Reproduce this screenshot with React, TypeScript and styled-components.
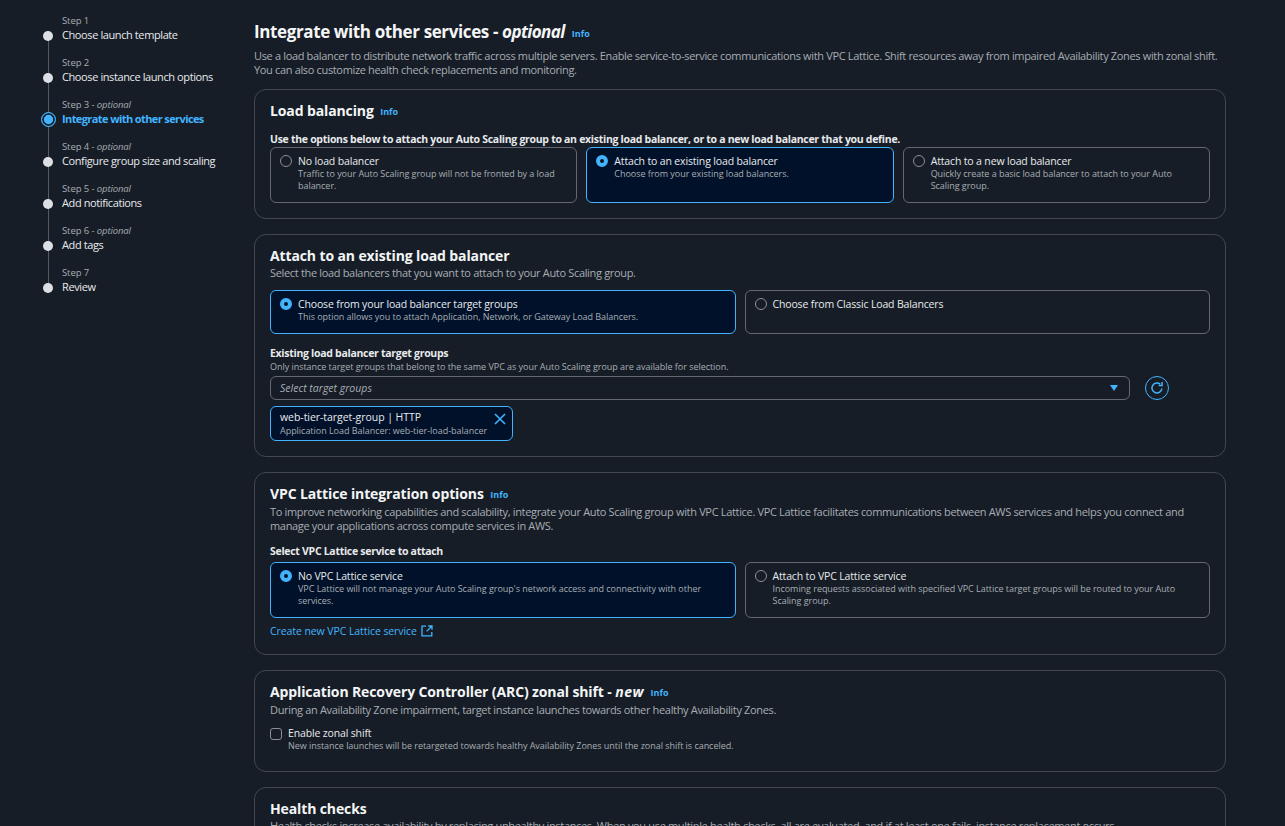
import styled, { createGlobalStyle } from "styled-components"

const GlobalStyle = createGlobalStyle`
    html, body {
        margin: 0;
        height: 826px;
        overflow: hidden;
        background: #161d26;
    }
    * { box-sizing: border-box; }
    body {
        font-family: "Open Sans", "Noto Sans", sans-serif;
        color: #e8eaed;
    }
`

const steps = [
    { label: "Step 1", title: "Choose launch template" },
    { label: "Step 2", title: "Choose instance launch options" },
    { label: "Step 3", optional: true, title: "Integrate with other services", active: true },
    { label: "Step 4", optional: true, title: "Configure group size and scaling" },
    { label: "Step 5", optional: true, title: "Add notifications" },
    { label: "Step 6", optional: true, title: "Add tags" },
    { label: "Step 7", title: "Review" },
]

const Radio = (props: { on?: boolean }) => <RadioDot $on={props.on} />

const Tile = (props: { title: string; text?: string; on?: boolean }) => (
    <TileBox $on={props.on}>
        <Radio on={props.on} />
        <div>
            <TileTitle>{props.title}</TileTitle>
            {props.text && <TileText>{props.text}</TileText>}
        </div>
    </TileBox>
)

export default function App() {
    return (
        <Page>
            <GlobalStyle />
            <Nav>
                {steps.map((s, i) => (
                    <NavStep key={s.label} $last={i === steps.length - 1}>
                        <NavLabel>
                            {s.label}
                            {s.optional && <> - <em>optional</em></>}
                        </NavLabel>
                        <NavTitle $active={s.active}>
                            <NavDot $active={s.active} />
                            {s.title}
                        </NavTitle>
                    </NavStep>
                ))}
            </Nav>
            <Main>
                <PageTitle>
                    Integrate with other services - <em>optional</em> <Info>Info</Info>
                </PageTitle>
                <PageText>
                    Use a load balancer to distribute network traffic across multiple servers. Enable service-to-service communications with VPC Lattice. Shift resources away from impaired Availability Zones with zonal shift. You can also customize health check replacements and monitoring.
                </PageText>

                <Card>
                    <CardTitle>Load balancing <Info>Info</Info></CardTitle>
                    <FieldLabel $top={10}>Use the options below to attach your Auto Scaling group to an existing load balancer, or to a new load balancer that you define.</FieldLabel>
                    <Tiles $cols={3} $height={56}>
                        <Tile title="No load balancer" text="Traffic to your Auto Scaling group will not be fronted by a load balancer." />
                        <Tile on title="Attach to an existing load balancer" text="Choose from your existing load balancers." />
                        <Tile title="Attach to a new load balancer" text="Quickly create a basic load balancer to attach to your Auto Scaling group." />
                    </Tiles>
                </Card>

                <Card>
                    <CardTitle>Attach to an existing load balancer</CardTitle>
                    <CardText>Select the load balancers that you want to attach to your Auto Scaling group.</CardText>
                    <Tiles $cols={2} $height={44} $top={10}>
                        <Tile on title="Choose from your load balancer target groups" text="This option allows you to attach Application, Network, or Gateway Load Balancers." />
                        <Tile title="Choose from Classic Load Balancers" />
                    </Tiles>
                    <FieldLabel $top={12}>Existing load balancer target groups</FieldLabel>
                    <Hint>Only instance target groups that belong to the same VPC as your Auto Scaling group are available for selection.</Hint>
                    <SelectRow>
                        <Select>
                            Select target groups
                            <Caret />
                        </Select>
                        <Refresh aria-label="Refresh">
                            <svg width="14" height="14" viewBox="0 0 16 16" fill="none" stroke="#42b4ff" strokeWidth="1.7">
                                <path d="M13.6 8.6A5.7 5.7 0 1 1 11.6 3.6" />
                                <path d="M13.8 1.2v3.9H9.9" />
                            </svg>
                        </Refresh>
                    </SelectRow>
                    <Chip>
                        <div>
                            <ChipTitle>web-tier-target-group | HTTP</ChipTitle>
                            <ChipText>Application Load Balancer: web-tier-load-balancer</ChipText>
                        </div>
                        <svg width="12" height="12" viewBox="0 0 12 12" stroke="#42b4ff" strokeWidth="1.6" fill="none">
                            <path d="M1 1l10 10M11 1L1 11" />
                        </svg>
                    </Chip>
                </Card>

                <Card $extra={1}>
                    <CardTitle>VPC Lattice integration options <Info>Info</Info></CardTitle>
                    <CardText>To improve networking capabilities and scalability, integrate your Auto Scaling group with VPC Lattice. VPC Lattice facilitates communications between AWS services and helps you connect and manage your applications across compute services in AWS.</CardText>
                    <FieldLabel $top={11}>Select VPC Lattice service to attach</FieldLabel>
                    <Tiles $cols={2} $height={56} $top={3}>
                        <Tile on title="No VPC Lattice service" text="VPC Lattice will not manage your Auto Scaling group's network access and connectivity with other services." />
                        <Tile title="Attach to VPC Lattice service" text="Incoming requests associated with specified VPC Lattice target groups will be routed to your Auto Scaling group." />
                    </Tiles>
                    <LinkLine>
                        Create new VPC Lattice service
                        <svg width="12" height="12" viewBox="0 0 12 12" fill="none" stroke="#42b4ff" strokeWidth="1.3">
                            <path d="M5 1.2H1v9.6h9.8V7" />
                            <path d="M7.2 1h3.8v3.8M11 1L5.6 6.4" />
                        </svg>
                    </LinkLine>
                </Card>

                <Card $extra={4}>
                    <CardTitle>Application Recovery Controller (ARC) zonal shift - <em>new</em> <Info>Info</Info></CardTitle>
                    <CardText>During an Availability Zone impairment, target instance launches towards other healthy Availability Zones.</CardText>
                    <CheckRow>
                        <CheckBox />
                        <div>
                            <TileTitle>Enable zonal shift</TileTitle>
                            <TileText>New instance launches will be retargeted towards healthy Availability Zones until the zonal shift is canceled.</TileText>
                        </div>
                    </CheckRow>
                </Card>

                <Card>
                    <CardTitle>Health checks</CardTitle>
                    <CardText>Health checks increase availability by replacing unhealthy instances. When you use multiple health checks, all are evaluated, and if at least one fails, instance replacement occurs.</CardText>
                </Card>
            </Main>
        </Page>
    )
}

const Page = styled.div`
    display: flex;
    align-items: flex-start;
    height: 826px;
    overflow: hidden;
    background: #161d26;
`

const Nav = styled.nav`
    width: 254px;
    flex: none;
    padding: 14px 0 0 62px;
`

const NavStep = styled.div<{ $last?: boolean }>`
    position: relative;
    height: 42px;

    &::before {
        content: "";
        display: ${p => (p.$last ? "none" : "block")};
        position: absolute;
        left: -14.5px;
        top: 21px;
        width: 1px;
        height: 42px;
        background: #545b64;
    }
`

const NavLabel = styled.div`
    font-size: 9.5px;
    line-height: 13px;
    letter-spacing: -0.1px;
    color: #a8adb4;

    em { font-style: italic; }
`

const NavTitle = styled.div<{ $active?: boolean }>`
    position: relative;
    font-size: 11px;
    line-height: 16px;
    letter-spacing: ${p => (p.$active ? "-0.6px" : "-0.4px")};
    white-space: nowrap;
    color: ${p => (p.$active ? "#42b4ff" : "#e8eaed")};
    font-weight: ${p => (p.$active ? 700 : 400)};
`

const NavDot = styled.span<{ $active?: boolean }>`
    position: absolute;
    top: 50%;
    left: ${p => (p.$active ? "-21px" : "-19px")};
    width: ${p => (p.$active ? "15px" : "10px")};
    height: ${p => (p.$active ? "15px" : "10px")};
    margin-top: ${p => (p.$active ? "-7px" : "-4px")};
    border-radius: 50%;
    background: ${p => (p.$active ? "#42b4ff" : "#dcdfe3")};
    border: ${p => (p.$active ? "1.5px solid #42b4ff" : "none")};
    box-shadow: ${p => (p.$active ? "inset 0 0 0 1.8px #161d26" : "none")};
`

const Main = styled.main`
    width: 972px;
    flex: none;
    padding-top: 20px;
`

const PageTitle = styled.h1`
    margin: 0;
    font-size: 17px;
    line-height: 24px;
    font-weight: 700;
    letter-spacing: -0.38px;
    color: #f4f5f6;

    em { font-style: italic; letter-spacing: -0.6px; }
`

const Info = styled.span`
    font-size: 9px;
    font-weight: 700;
    color: #42b4ff;
    margin-left: 3px;
    vertical-align: 1px;
    font-style: normal;
    letter-spacing: 0;
`

const PageText = styled.p`
    margin: 3px 0 12px;
    font-size: 11px;
    line-height: 14px;
    letter-spacing: -0.34px;
    color: #a8adb4;
`

const Card = styled.section<{ $extra?: number }>`
    border: 1px solid #424750;
    border-radius: 12px;
    padding: 11px 15px ${p => 15 + (p.$extra ?? 0)}px;
    margin-bottom: 15px;
`

const CardTitle = styled.h2`
    margin: 0;
    font-size: 14px;
    line-height: 20px;
    font-weight: 700;
    letter-spacing: -0.12px;
    color: #f4f5f6;

    em { font-style: italic; letter-spacing: 0.5px; }
`

const CardText = styled.p`
    margin: 0;
    font-size: 11px;
    line-height: 14px;
    letter-spacing: -0.33px;
    color: #a8adb4;
`

const FieldLabel = styled.div<{ $top?: number }>`
    margin-top: ${p => p.$top ?? 6}px;
    font-size: 10.5px;
    line-height: 15px;
    font-weight: 700;
    letter-spacing: -0.29px;
    color: #e8eaed;
`

const Tiles = styled.div<{ $cols: number; $height: number; $top?: number }>`
    display: grid;
    grid-template-columns: repeat(${p => p.$cols}, 1fr);
    grid-auto-rows: ${p => p.$height}px;
    gap: 9px;
    margin-top: ${p => p.$top ?? 0}px;
`

const TileBox = styled.div<{ $on?: boolean }>`
    display: flex;
    gap: 6px;
    padding: 6px 9px;
    border-radius: 6px;
    border: 1px solid ${p => (p.$on ? "#42b4ff" : "#656871")};
    background: ${p => (p.$on ? "#001129" : "transparent")};
`

const RadioDot = styled.span<{ $on?: boolean }>`
    flex: none;
    width: 12px;
    height: 12px;
    margin-top: 1px;
    border-radius: 50%;
    border: ${p => (p.$on ? "4px solid #42b4ff" : "1.5px solid #8c8f96")};
    background: ${p => (p.$on ? "#0f141a" : "transparent")};
`

const TileTitle = styled.div`
    font-size: 10.5px;
    line-height: 14px;
    letter-spacing: -0.15px;
    color: #e8eaed;
`

const TileText = styled.div`
    font-size: 9px;
    line-height: 12px;
    letter-spacing: -0.04px;
    color: #a8adb4;
`

const Hint = styled.div`
    font-size: 9px;
    line-height: 12px;
    letter-spacing: -0.04px;
    color: #a8adb4;
`

const SelectRow = styled.div`
    display: flex;
    align-items: center;
    gap: 15px;
    margin-top: 3px;
`

const Select = styled.div`
    width: 860px;
    height: 24px;
    display: flex;
    align-items: center;
    justify-content: space-between;
    padding: 0 11px 0 9px;
    border: 1px solid #656871;
    border-radius: 6px;
    font-size: 10.5px;
    font-style: italic;
    color: #a8adb4;
`

const Caret = styled.span`
    width: 0;
    height: 0;
    border-left: 4px solid transparent;
    border-right: 4px solid transparent;
    border-top: 6px solid #42b4ff;
`

const Refresh = styled.button`
    width: 24px;
    height: 24px;
    padding: 0;
    display: flex;
    align-items: center;
    justify-content: center;
    border: 1px solid #42b4ff;
    border-radius: 50%;
    background: transparent;
`

const Chip = styled.div`
    width: 243px;
    height: 35px;
    margin-top: 6px;
    padding: 3px 6px 0 9px;
    display: flex;
    align-items: flex-start;
    justify-content: space-between;
    border: 1px solid #42b4ff;
    border-radius: 6px;
    background: #001129;

    svg { margin-top: 3px; }
`

const ChipTitle = styled.div`
    font-size: 10.5px;
    line-height: 14px;
    letter-spacing: -0.05px;
    color: #e8eaed;
`

const ChipText = styled.div`
    font-size: 9px;
    line-height: 13px;
    letter-spacing: -0.03px;
    color: #a8adb4;
`

const LinkLine = styled.a`
    display: flex;
    align-items: center;
    gap: 4px;
    margin-top: 6px;
    font-size: 10.5px;
    line-height: 14px;
    letter-spacing: -0.08px;
    color: #42b4ff;
`

const CheckRow = styled.div`
    display: flex;
    gap: 6px;
    margin-top: 9px;
`

const CheckBox = styled.span`
    flex: none;
    width: 12px;
    height: 12px;
    margin-top: 2px;
    border: 1.5px solid #8c8f96;
    border-radius: 3px;
`
